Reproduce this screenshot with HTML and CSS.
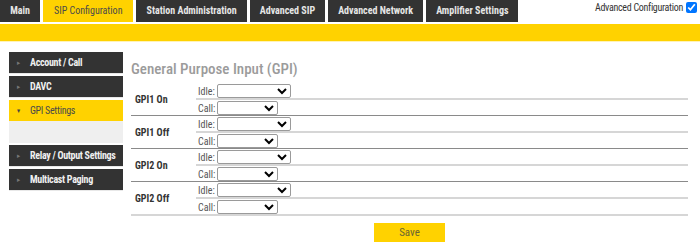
FILE: index.html
```html
<!DOCTYPE html>
<html lang="en">
<head>
    <meta charset="UTF-8">
    <title>SIP Configuration</title>
    <link rel="stylesheet" href="styles.css">
</head>
<body>

    <header class="topbar">
        <nav class="tabs">
            <a href="#" class="tab">Main</a>
            <a href="#" class="tab active">SIP Configuration</a>
            <a href="#" class="tab">Station Administration</a>
            <a href="#" class="tab">Advanced SIP</a>
            <a href="#" class="tab">Advanced Network</a>
            <a href="#" class="tab">Amplifier Settings</a>
        </nav>
        <label class="adv-config">Advanced Configuration <input type="checkbox" checked></label>
    </header>
    <div class="strip"></div>

    <div class="layout">
        <aside class="sidebar">
            <a href="#" class="side-item"><span class="arrow">&#9656;</span>Account / Call</a>
            <a href="#" class="side-item"><span class="arrow">&#9656;</span>DAVC</a>
            <a href="#" class="side-item open"><span class="arrow">&#9662;</span>GPI Settings</a>
            <div class="side-sub"></div>
            <a href="#" class="side-item"><span class="arrow">&#9656;</span>Relay / Output Settings</a>
            <a href="#" class="side-item"><span class="arrow">&#9656;</span>Multicast Paging</a>
        </aside>

        <main class="content">
            <h2 class="page-title">General Purpose Input (GPI)</h2>
            <table class="gpi-table">
                <tr class="idle-row">
                    <th rowspan="2">GPI1 On</th>
                    <td class="field-label">Idle:</td>
                    <td><select class="sel-wide"><option></option></select></td>
                </tr>
                <tr class="call-row">
                    <td class="field-label">Call:</td>
                    <td><select class="sel-narrow"><option></option></select></td>
                </tr>
                <tr class="idle-row">
                    <th rowspan="2">GPI1 Off</th>
                    <td class="field-label">Idle:</td>
                    <td><select class="sel-wide"><option></option></select></td>
                </tr>
                <tr class="call-row">
                    <td class="field-label">Call:</td>
                    <td><select class="sel-narrow"><option></option></select></td>
                </tr>
                <tr class="idle-row">
                    <th rowspan="2">GPI2 On</th>
                    <td class="field-label">Idle:</td>
                    <td><select class="sel-wide"><option></option></select></td>
                </tr>
                <tr class="call-row">
                    <td class="field-label">Call:</td>
                    <td><select class="sel-narrow"><option></option></select></td>
                </tr>
                <tr class="idle-row">
                    <th rowspan="2" class="last">GPI2 Off</th>
                    <td class="field-label">Idle:</td>
                    <td><select class="sel-wide"><option></option></select></td>
                </tr>
                <tr class="call-row last">
                    <td class="field-label">Call:</td>
                    <td><select class="sel-narrow"><option></option></select></td>
                </tr>
            </table>
            <div class="actions">
                <button class="save-button">Save</button>
            </div>
        </main>
    </div>

</body>
</html>
```

FILE: styles.css
```css
:root {
    --yellow: #ffd200;
    --dark: #333333;
    --text-dark: #333333;
    --line-light: #d6d6d6;
    --line-dark: #8a8a8a;
    --main-font: 'Roboto Condensed', 'Liberation Sans Narrow', 'DejaVu Sans Condensed', Roboto, sans-serif;
}

body {
    margin: 0;
    padding: 0;
    font-family: var(--main-font);
    background: #fff;
    color: var(--text-dark);
}

.topbar {
    display: flex;
    justify-content: space-between;
    align-items: flex-start;
    height: 23px;
}

.tabs {
    display: flex;
    gap: 3px;
}

.tab {
    display: block;
    min-width: 20px;
    height: 22px;
    line-height: 22px;
    padding: 0 10px;
    background: var(--dark);
    color: #e6e6e6;
    font-size: 10px;
    font-weight: bold;
    text-align: center;
    text-decoration: none;
}

.tab.active {
    background: var(--yellow);
    color: #4a4a4a;
    font-weight: normal;
    padding: 0 11px;
}

.adv-config {
    display: flex;
    align-items: center;
    gap: 3px;
    font-size: 10px;
    letter-spacing: -0.3px;
    color: #333;
    padding-top: 2px;
}

.adv-config input {
    margin: 0 3px 0 0;
    width: 11px;
    height: 11px;
}

.strip {
    height: 17px;
    margin-top: 1px;
    background: var(--yellow);
    border-bottom: 1px solid #fff3b8;
}

.layout {
    display: flex;
    gap: 8px;
    padding: 10px 0 0 9px;
}

/* Left menu */
.sidebar {
    width: 114px;
    display: flex;
    flex-direction: column;
    gap: 2px;
}

.side-item {
    display: flex;
    align-items: center;
    height: 21px;
    background: var(--dark);
    color: #f0f0f0;
    font-size: 10px;
    font-weight: bold;
    letter-spacing: -0.3px;
    text-decoration: none;
    border-bottom: 1px solid #e8e8e8;
    white-space: nowrap;
}

.side-item .arrow {
    width: 21px;
    padding-left: 8px;
    box-sizing: border-box;
    color: #777;
    font-size: 7px;
}

.side-item.open {
    background: var(--yellow);
    color: #4a4a4a;
    font-weight: normal;
    border-bottom: none;
}

.side-item.open .arrow {
    color: #444;
}

.side-sub {
    height: 22px;
    margin-top: -2px;
    background: #efefef;
}

/* Main content */
.content {
    width: 557px;
}

.page-title {
    margin: 8px 0 5px 0;
    font-size: 15px;
    font-weight: 500;
    color: #9b9b9b;
}

.gpi-table {
    width: 100%;
    border-collapse: collapse;
}

.gpi-table th {
    width: 61px;
    padding: 0 0 0 4px;
    text-align: left;
    font-size: 10px;
    font-weight: bold;
    color: #333;
    border-bottom: 1px solid var(--line-dark);
}

.gpi-table td {
    height: 14px;
    padding: 1px 0 0 0;
    font-size: 10px;
}

.field-label {
    width: 19px;
    padding-left: 2px !important;
    color: #555;
}

.idle-row td {
    border-bottom: 2px solid var(--line-light);
}

.call-row td {
    border-bottom: 1px solid var(--line-dark);
}

.gpi-table .call-row.last td,
.gpi-table th.last {
    border-bottom: 2px solid var(--line-light);
}

select {
    display: block;
    height: 14px;
    padding: 0 2px;
    font-size: 9px;
    font-family: var(--main-font);
    border: 1px solid #9a9a9a;
    border-radius: 2px;
    background: #fff;
}

.sel-wide {
    width: 74px;
}

.sel-narrow {
    width: 61px;
}

.actions {
    display: flex;
    justify-content: center;
    padding-top: 7px;
}

.save-button {
    width: 71px;
    height: 19px;
    border: none;
    background: var(--yellow);
    color: #6b6531;
    font-family: var(--main-font);
    font-size: 11px;
    cursor: pointer;
}
```
